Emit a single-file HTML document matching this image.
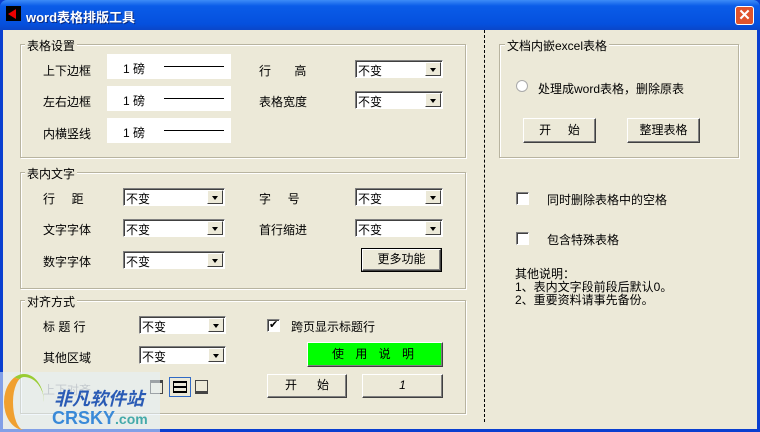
<!DOCTYPE html><html><head><meta charset="utf-8"><style>
*{margin:0;padding:0;box-sizing:border-box}
body{width:760px;height:432px;overflow:hidden;background:#0a3fd0;font-family:"Liberation Sans","SimSun","WenQuanYi Zen Hei","Noto Sans CJK SC",sans-serif;font-size:12px;color:#000;position:relative}
.a{position:absolute}
#title{left:0;top:0;width:760px;height:30px;background:linear-gradient(#3d8cf7,#0a5ce8 20%,#0550de 80%,#0a46c8);border-radius:7px 7px 0 0}
#body{left:3px;top:30px;width:754px;height:399px;background:#ECE9D8}
.grp{position:absolute;border:1px solid #b8b4a0;box-shadow:inset 1px 1px 0 #fff,1px 1px 0 #fff}
.gl{position:absolute;background:#ECE9D8;padding:0 2px;font-size:12px}
.wb{position:absolute;background:#fff;width:124px;height:25px}
.wb span{position:absolute;left:16px;top:6px}
.wb i{position:absolute;left:57px;top:12px;width:60px;border-top:1px solid #000}
.sel{position:absolute;height:18px;background:#fff;border:1px solid;border-color:#808080 #fff #fff #808080;box-shadow:inset 1px 1px 0 #404040}
.sel span{position:absolute;left:2px;top:1px}
.sel b{position:absolute;right:1px;top:1px;width:16px;height:14px;background:#ECE9D8;border:1px solid;border-color:#fff #404040 #404040 #fff}
.sel b:after{content:"";position:absolute;left:4px;top:5px;border:3px solid transparent;border-top:4px solid #000;border-bottom:0}
.btn{position:absolute;background:#ECE9D8;border:1px solid;border-color:#fff #404040 #404040 #fff;box-shadow:inset -1px -1px 0 #808080;text-align:center}
.cb{position:absolute;width:13px;height:13px;background:#fff;border:1px solid;border-color:#808080 #fff #fff #808080;box-shadow:inset 1px 1px 0 #404040}
</style></head><body>
<div id="title" class="a"></div>
<div class="a" style="left:6px;top:6px;width:15px;height:15px;background:#000"><div class="a" style="left:2px;top:3px;border:5px solid transparent;border-right:8px solid #e00;border-left:0"></div></div>
<div class="a" style="left:26px;top:7px;color:#fff;font-weight:bold;font-size:13px;text-shadow:1px 1px #0a2a80">word表格排版工具</div>
<div class="a" style="left:735px;top:6px;width:19px;height:19px;background:#e0532c;border:1px solid #fff;border-radius:3px;color:#fff;font-weight:bold;text-align:center;line-height:17px;font-size:15px">✕</div>
<div id="body" class="a"></div>

<div class="grp" style="left:20px;top:44px;width:446px;height:114px"></div><div class="gl" style="left:25px;top:37px">表格设置</div>
<div class="a" style="left:43px;top:62px">上下边框</div><div class="wb" style="left:107px;top:54px"><span>1 磅</span><i></i></div>
<div class="a" style="left:43px;top:93px">左右边框</div><div class="wb" style="left:107px;top:86px"><span>1 磅</span><i></i></div>
<div class="a" style="left:43px;top:125px">内横竖线</div><div class="wb" style="left:107px;top:118px"><span>1 磅</span><i></i></div>
<div class="a" style="left:259px;top:62px">行&nbsp;&nbsp;&nbsp;&nbsp;&nbsp;&nbsp;&nbsp;高</div><div class="sel" style="left:355px;top:60px;width:88px"><span>不变</span><b></b></div>
<div class="a" style="left:259px;top:93px">表格宽度</div><div class="sel" style="left:355px;top:91px;width:88px"><span>不变</span><b></b></div>

<div class="grp" style="left:20px;top:172px;width:446px;height:117px"></div><div class="gl" style="left:25px;top:165px">表内文字</div>
<div class="a" style="left:43px;top:190px">行&nbsp;&nbsp;&nbsp;&nbsp;&nbsp;距</div><div class="sel" style="left:123px;top:188px;width:102px"><span>不变</span><b></b></div>
<div class="a" style="left:43px;top:221px">文字字体</div><div class="sel" style="left:123px;top:219px;width:102px"><span>不变</span><b></b></div>
<div class="a" style="left:43px;top:253px">数字字体</div><div class="sel" style="left:123px;top:251px;width:102px"><span>不变</span><b></b></div>
<div class="a" style="left:259px;top:190px">字&nbsp;&nbsp;&nbsp;&nbsp;&nbsp;号</div><div class="sel" style="left:355px;top:188px;width:88px"><span>不变</span><b></b></div>
<div class="a" style="left:259px;top:221px">首行缩进</div><div class="sel" style="left:355px;top:219px;width:88px"><span>不变</span><b></b></div>
<div class="btn" style="left:362px;top:249px;width:79px;height:22px;line-height:19px;outline:1px solid #000">更多功能</div>

<div class="grp" style="left:20px;top:300px;width:446px;height:114px"></div><div class="gl" style="left:25px;top:293px">对齐方式</div>
<div class="a" style="left:43px;top:318px">标 题 行</div><div class="sel" style="left:139px;top:316px;width:87px"><span>不变</span><b></b></div>
<div class="a" style="left:43px;top:349px">其他区域</div><div class="sel" style="left:139px;top:346px;width:87px"><span>不变</span><b></b></div>
<div class="cb" style="left:267px;top:319px"><span class="a" style="left:1px;top:-2px;font-size:11px">✔</span></div><div class="a" style="left:291px;top:318px">跨页显示标题行</div>
<div class="btn" style="left:307px;top:342px;width:136px;height:25px;background:#00ff00;line-height:22px;letter-spacing:4px">使 用 说 明</div>
<div class="a" style="left:43px;top:381px;color:#999">上下对齐</div>
<div class="a" style="left:150px;top:380px;width:13px;height:14px;border:1px solid #444;border-top-width:3px"></div>
<div class="a" style="left:169px;top:377px;width:22px;height:20px;border:1px solid #316ac5"><div class="a" style="left:3px;top:3px;width:14px;height:12px;border:1px solid #000;border-width:2px 1px"></div><div class="a" style="left:4px;top:8px;width:12px;border-top:2px solid #000"></div></div>
<div class="a" style="left:195px;top:380px;width:13px;height:14px;border:1px solid #444;border-bottom-width:3px"></div>
<div class="btn" style="left:267px;top:374px;width:80px;height:24px;line-height:21px">开&nbsp;&nbsp;&nbsp;&nbsp;&nbsp;&nbsp;始</div>
<div class="btn" style="left:362px;top:374px;width:81px;height:24px;line-height:21px;font-style:italic">1</div>

<div class="a" style="left:484px;top:30px;height:392px;border-left:1px dashed #000"></div>
<div class="grp" style="left:499px;top:44px;width:240px;height:114px"></div><div class="gl" style="left:505px;top:37px">文档内嵌excel表格</div>
<div class="a" style="left:516px;top:80px;width:12px;height:12px;border-radius:50%;background:#fff;border:1px solid #aaa"></div><div class="a" style="left:538px;top:80px">处理成word表格，删除原表</div>
<div class="btn" style="left:523px;top:118px;width:73px;height:25px;line-height:22px">开&nbsp;&nbsp;&nbsp;&nbsp;&nbsp;始</div>
<div class="btn" style="left:627px;top:118px;width:73px;height:25px;line-height:22px">整理表格</div>
<div class="cb" style="left:516px;top:192px"></div><div class="a" style="left:547px;top:191px">同时删除表格中的空格</div>
<div class="cb" style="left:516px;top:232px"></div><div class="a" style="left:547px;top:231px">包含特殊表格</div>
<div class="a" style="left:515px;top:268px;line-height:13px">其他说明：<br>1、表内文字段前段后默认0。<br>2、重要资料请事先备份。</div>

<div class="a" style="left:0;top:372px;width:160px;height:60px;background:rgba(230,240,250,.55)"></div>
<div class="a" style="left:4px;top:374px;width:40px;height:56px;border-radius:50%;border-left:9px solid #f0a030;border-top:3px solid #9c3"></div>
<div class="a" style="left:54px;top:385px;color:#2a5bb5;font-weight:bold;font-size:18px;font-style:italic">非凡软件站</div>
<div class="a" style="left:52px;top:408px;color:#3a8ad8;font-weight:bold;font-size:18px">CRSKY<span style="font-size:14px;color:#4aa">.com</span></div>
</body></html>
